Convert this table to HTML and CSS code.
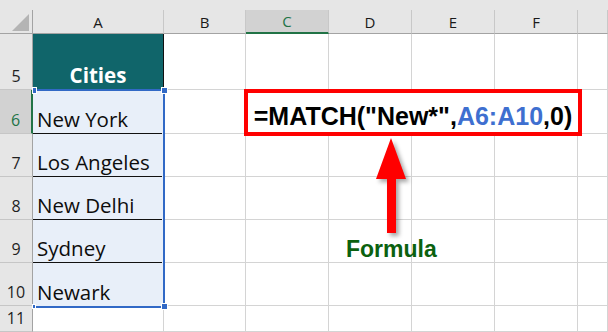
FILE: index.html
```html
<!DOCTYPE html>
<html lang="en">
<head>
<meta charset="utf-8">
<title>MATCH with wildcard</title>
<link rel="stylesheet" href="styles.css">
</head>
<body>
<div class="sheet">
  <div class="strip"></div>

  <!-- column headers -->
  <div class="corner"><span class="tri"></span></div>
  <div class="colhdr">A</div>
  <div class="colhdr">B</div>
  <div class="colhdr active">C</div>
  <div class="colhdr">D</div>
  <div class="colhdr">E</div>
  <div class="colhdr">F</div>
  <div class="colhdr"></div>

  <!-- row 5 -->
  <div class="rowhdr">5</div>
  <div class="cell head">Cities</div>
  <div class="cell"></div><div class="cell"></div><div class="cell"></div>
  <div class="cell"></div><div class="cell"></div><div class="cell"></div>

  <!-- selected range A6:A10 -->
  <div class="range">
    <div class="city">New York</div>
    <div class="city">Los Angeles</div>
    <div class="city">New Delhi</div>
    <div class="city">Sydney</div>
    <div class="city last">Newark</div>
    <span class="handle tl"></span>
    <span class="handle tr"></span>
    <span class="handle bl"></span>
    <span class="handle br"></span>
  </div>

  <!-- row 6 -->
  <div class="rowhdr active">6</div>
  <div class="cell"></div><div class="cell"></div><div class="cell"></div>
  <div class="cell"></div><div class="cell"></div><div class="cell"></div>
  <!-- row 7 -->
  <div class="rowhdr">7</div>
  <div class="cell"></div><div class="cell"></div><div class="cell"></div>
  <div class="cell"></div><div class="cell"></div><div class="cell"></div>
  <!-- row 8 -->
  <div class="rowhdr">8</div>
  <div class="cell"></div><div class="cell"></div><div class="cell"></div>
  <div class="cell"></div><div class="cell"></div><div class="cell"></div>
  <!-- row 9 -->
  <div class="rowhdr">9</div>
  <div class="cell"></div><div class="cell"></div><div class="cell"></div>
  <div class="cell"></div><div class="cell"></div><div class="cell"></div>
  <!-- row 10 -->
  <div class="rowhdr">10</div>
  <div class="cell"></div><div class="cell"></div><div class="cell"></div>
  <div class="cell"></div><div class="cell"></div><div class="cell"></div>
  <!-- row 11 -->
  <div class="rowhdr">11</div>
  <div class="cell"></div><div class="cell"></div><div class="cell"></div><div class="cell"></div>
  <div class="cell"></div><div class="cell"></div><div class="cell"></div>

  <!-- callout: formula, arrow and label -->
  <div class="formula">=MATCH("New*",<span class="ref">A6:A10</span>,0)</div>
  <svg class="arrow" width="44" height="106" viewBox="0 0 44 106">
    <path d="M21 4 L36 45 L26 45 L26 99 L17 99 L17 45 L6 45 Z" fill="#ff0000"/>
  </svg>
  <div class="label">Formula</div>
</div>
</body>
</html>
```

FILE: styles.css
```css
* {
  box-sizing: border-box;
}

body {
  margin: 0;
  width: 608px;
  height: 332px;
  overflow: hidden;
  background: #ffffff;
  font-family: "Open Sans", "Noto Sans", sans-serif;
  color: #000000;
}

.sheet {
  position: relative;
  display: grid;
  grid-template-columns: 33px 131px 82px 83px 83px 83px 83px 30px;
  grid-template-rows: 10px 24px 56px 44px 43px 43px 43px 43px 26px;
}

.strip {
  grid-column: 1 / -1;
  background: #e6e6e6;
}

/* select-all box */
.corner {
  display: flex;
  justify-content: flex-end;
  align-items: flex-end;
  padding: 0 3px 2px 0;
  background: #e6e6e6;
  border-right: 1px solid #a3a3a3;
  border-bottom: 1px solid #a3a3a3;
}

.tri {
  width: 17px;
  height: 17px;
  background: #b4b4b4;
  clip-path: polygon(100% 0, 100% 100%, 0 100%);
}

.colhdr {
  display: flex;
  align-items: center;
  justify-content: center;
  background: #e6e6e6;
  border-right: 1px solid #c8c8c8;
  border-bottom: 1px solid #a3a3a3;
  font-size: 15px;
  line-height: 18px;
  color: #1a1a1a;
}

.colhdr:last-child {
  border-right: none;
}

.colhdr.active {
  background: #d2d2d2;
  color: #217346;
  border-bottom: 2px solid #217346;
}

.rowhdr {
  display: flex;
  align-items: flex-end;
  justify-content: center;
  padding-bottom: 3px;
  background: #e6e6e6;
  border-right: 1px solid #a3a3a3;
  border-bottom: 1px solid #c6c6c6;
  font-size: 16px;
  line-height: 20px;
  color: #1f1f1f;
}

.rowhdr.active {
  background: #d2d2d2;
  color: #217346;
  border-right: 2px solid #217346;
}

.cell {
  border-right: 1px solid #d4d4d4;
  border-bottom: 1px solid #d4d4d4;
}

.cell.head {
  display: flex;
  align-items: flex-end;
  justify-content: center;
  padding-bottom: 3px;
  background: #10656a;
  border-right: 1px solid #111111;
  border-bottom: none;
  color: #ffffff;
  font-weight: 700;
  font-size: 20.5px;
  line-height: 24px;
}

/* the highlighted block of cities */
.range {
  position: relative;
  grid-column: 2;
  grid-row: 4 / 9;
  margin: -1px -1px -2px 0;
  display: flex;
  flex-direction: column;
  background: #e8eff9;
  border-top: 2px solid #3169c6;
  border-right: 2px solid #3169c6;
  border-bottom: 2px solid #3169c6;
}

.city {
  height: 43px;
  flex: none;
  display: flex;
  align-items: flex-end;
  margin-right: 1px;
  padding: 0 0 2px 4px;
  border-bottom: 1px solid #111111;
  font-size: 20.5px;
  line-height: 24px;
  color: #0d0d0d;
}

.city.last {
  border-bottom: none;
}

.handle {
  position: absolute;
  width: 7px;
  height: 7px;
  background: #3169c6;
  border: 1px solid #ffffff;
}

.handle.tl { left: -1px; top: -4px; width: 5px; }
.handle.tr { right: -5px; top: -4px; }
.handle.bl { left: -1px; bottom: -3px; width: 4px; height: 5px; }
.handle.br { right: -5px; bottom: -4px; }

/* formula callout */
.formula {
  position: absolute;
  left: 244px;
  top: 89px;
  width: 338px;
  height: 47px;
  display: flex;
  justify-content: center;
  padding-top: 9px;
  background: #ffffff;
  border: 4px solid #ff0000;
  font-family: "Liberation Sans", Arial, sans-serif;
  font-weight: 700;
  font-size: 25px;
  line-height: 29px;
  color: #000000;
  white-space: nowrap;
}

.ref {
  color: #3e6fd0;
}

.arrow {
  position: absolute;
  left: 370px;
  top: 134px;
  filter: drop-shadow(3px 3px 2px rgba(0, 0, 0, 0.35));
}

.label {
  position: absolute;
  left: 346px;
  top: 238px;
  font-family: "Liberation Sans", Arial, sans-serif;
  font-weight: 700;
  font-size: 23px;
  line-height: 23px;
  color: #0b610f;
}
```
